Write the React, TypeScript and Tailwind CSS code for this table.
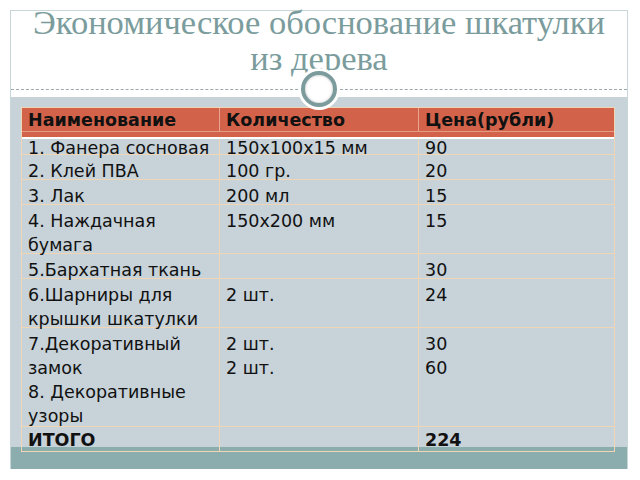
import React from 'react';

type Row = {
  name: string[];
  qty: string[];
  price: string[];
  h: string;
  bold?: boolean;
};

const rows: Row[] = [
  { name: ['1. Фанера сосновая'], qty: ['150x100x15 мм'], price: ['90'], h: 'h-[16px]' },
  { name: ['2. Клей ПВА'], qty: ['100 гр.'], price: ['20'], h: 'h-[25px]' },
  { name: ['3. Лак'], qty: ['200 мл'], price: ['15'], h: 'h-[25px]' },
  { name: ['4. Наждачная', 'бумага'], qty: ['150x200 мм'], price: ['15'], h: 'h-[49px]' },
  { name: ['5.Бархатная ткань'], qty: [], price: ['30'], h: 'h-[25px]' },
  { name: ['6.Шарниры для', 'крышки шкатулки'], qty: ['2 шт.'], price: ['24'], h: 'h-[49px]' },
  {
    name: ['7.Декоративный', 'замок', '8. Декоративные', 'узоры'],
    qty: ['2 шт.', '2 шт.'],
    price: ['30', '60'],
    h: 'h-[99px]',
  },
  { name: ['ИТОГО'], qty: [], price: ['224'], h: 'h-[24px]', bold: true },
];

function Cell({ lines, bold, first, last }: { lines: string[]; bold?: boolean; first?: boolean; last?: boolean }) {
  const offset = first ? '-mt-[3px]' : last ? 'pt-[1px]' : 'pt-[4px]';
  return (
    <div className={`px-[6px] ${offset} ${bold ? 'font-bold' : ''}`}>
      {lines.map((l, i) => (
        <div key={i} className="leading-[24px] whitespace-nowrap">
          {l}
        </div>
      ))}
    </div>
  );
}

export default function App() {
  return (
    <div className="w-[640px] h-[480px] bg-white pt-[10px] px-[10px] font-['DejaVu_Sans',sans-serif]">
      <div className="w-[618px] border-x border-t border-[#c9d6d9]">
        {/* Title */}
        <div className="relative flex flex-col h-[79px] border-b border-dashed border-[#9aa9ab]">
          <h1 className="-mt-[7px] text-center text-[34.5px] leading-[36px] text-[#7b9c9c] font-['Liberation_Serif',serif] font-normal">
            Экономическое обоснование шкатулки
            <br />
            из дерева
          </h1>
          {/* ornament */}
          <div className="absolute left-1/2 top-[57px] -translate-x-1/2 w-[42px] h-[42px] rounded-full bg-white flex items-center justify-center z-20">
            <div className="w-[36px] h-[36px] rounded-full border-[4px] border-[#7c9b9d] bg-white shadow-[inset_0_0_3px_rgba(0,0,0,0.25)]" />
          </div>
        </div>
        <div className="h-[7px] bg-white" />

        {/* Panel */}
        <div className="h-[350px] bg-[#c7d2d9] pt-[10px] pl-[10px] pr-[12px]">
          <div className="relative z-10 border border-[#f0d6b4] text-[17.5px] text-[#111]">
            {/* header */}
            <div className="grid grid-cols-[198px_199px_1fr] h-[31px] bg-[#d2634a] border-b-2 border-white font-bold">
              <div className="px-[6px] leading-[24px] border-r border-[#e9a48f] border-b border-b-[#e59a85] h-[24px]">Наименование</div>
              <div className="px-[6px] leading-[24px] border-r border-[#e9a48f] border-b border-b-[#e59a85] h-[24px]">Количество</div>
              <div className="px-[6px] leading-[24px] border-b border-b-[#e59a85] h-[24px]">Цена(рубли)</div>
            </div>
            {rows.map((r, i) => (
              <div
                key={i}
                className={`grid grid-cols-[198px_199px_1fr] ${r.h} ${
                  i < rows.length - 1 ? 'border-b border-[#f0d6b4]' : ''
                }`}
              >
                <div className="border-r border-[#f0d6b4]">
                  <Cell lines={r.name} bold={r.bold} first={i === 0} last={r.bold} />
                </div>
                <div className="border-r border-[#f0d6b4]">
                  <Cell lines={r.qty} first={i === 0} />
                </div>
                <div>
                  <Cell lines={r.price} bold={r.bold} first={i === 0} last={r.bold} />
                </div>
              </div>
            ))}
          </div>
        </div>
        <div className="h-[22px] bg-[#8badad]" />
      </div>
    </div>
  );
}
